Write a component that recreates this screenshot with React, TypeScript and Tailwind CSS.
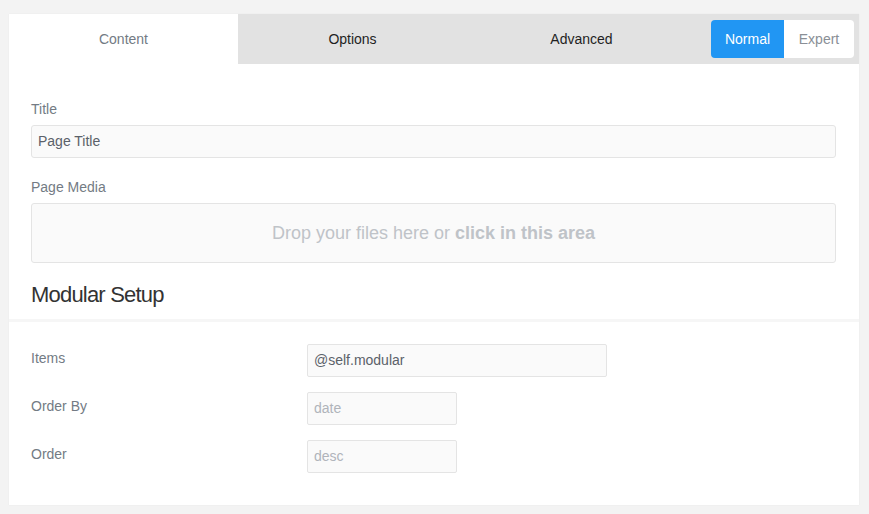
export default function App() {
    const tabs = ["Content", "Options", "Advanced"];
    const rows = [
        { label: "Items", value: "@self.modular", wide: true, placeholder: false },
        { label: "Order By", value: "date", wide: false, placeholder: true },
        { label: "Order", value: "desc", wide: false, placeholder: true },
    ];

    return (
        <div className="min-h-screen bg-[#f3f3f3] pt-[14px] pb-[10px] pl-[9px] pr-[10px] font-['Liberation_Sans',Arial,sans-serif]">
            <div className="bg-white shadow-[0_0_1px_rgba(0,0,0,0.08)]">
                {/* tab bar */}
                <div className="flex h-[50px] bg-[#e2e2e2]">
                    {tabs.map((t, i) => (
                        <div
                            key={t}
                            className={
                                i === 0
                                    ? "w-[229px] flex items-center justify-center bg-white text-[14px] text-[#737b84]"
                                    : "w-[229px] flex items-center justify-center text-[14px] text-[#1f1f1f]"
                            }
                        >
                            {t}
                        </div>
                    ))}
                    <div className="flex-1 flex items-center justify-end pr-[5px]">
                        <div className="flex h-[38px] rounded-[4px] overflow-hidden text-[14px]">
                            <div className="w-[73px] flex items-center justify-center bg-[#2196f3] text-white">Normal</div>
                            <div className="w-[70px] flex items-center justify-center bg-white text-[#8a8f96]">Expert</div>
                        </div>
                    </div>
                </div>

                {/* content fields */}
                <div className="pl-[22px] pr-[23px] pt-[35px]">
                    <div className="text-[14px] leading-[20px] text-[#737b84] mb-[6px]">Title</div>
                    <div className="h-[33px] border border-[#e4e4e4] rounded-[3px] bg-[#fafafa] flex items-center px-[6px] text-[14px] text-[#5b6169]">
                        Page Title
                    </div>
                    <div className="text-[14px] leading-[20px] text-[#737b84] mt-[19px] mb-[6px]">Page Media</div>
                    <div className="h-[60px] border border-[#e4e4e4] rounded-[3px] bg-[#fafafa] flex items-center justify-center text-[18px] text-[#bfc3c8]">
                        Drop your files here or&nbsp;<span className="font-bold">click in this area</span>
                    </div>
                    <h2 className="mt-[17px] text-[22px] leading-[30px] text-[#333] tracking-[-0.8px] pb-[9px]">Modular Setup</h2>
                </div>

                <div className="h-[3px] bg-[#f6f6f6]" />

                {/* modular setup */}
                <div className="px-[22px] pt-[22px] pb-[32px] flex flex-col gap-[15px]">
                    {rows.map((r) => (
                        <div key={r.label} className="flex">
                            <div className="w-[276px] pt-[4px] text-[14px] leading-[20px] text-[#737b84]">{r.label}</div>
                            <div
                                className={
                                    (r.wide ? "w-[300px] " : "w-[150px] ") +
                                    "h-[33px] border border-[#e4e4e4] rounded-[2px] bg-[#fafafa] flex items-center px-[6px] text-[14px] " +
                                    (r.placeholder ? "text-[#b0b4ba]" : "text-[#5b6169]")
                                }
                            >
                                {r.value}
                            </div>
                        </div>
                    ))}
                </div>
            </div>
        </div>
    );
}
